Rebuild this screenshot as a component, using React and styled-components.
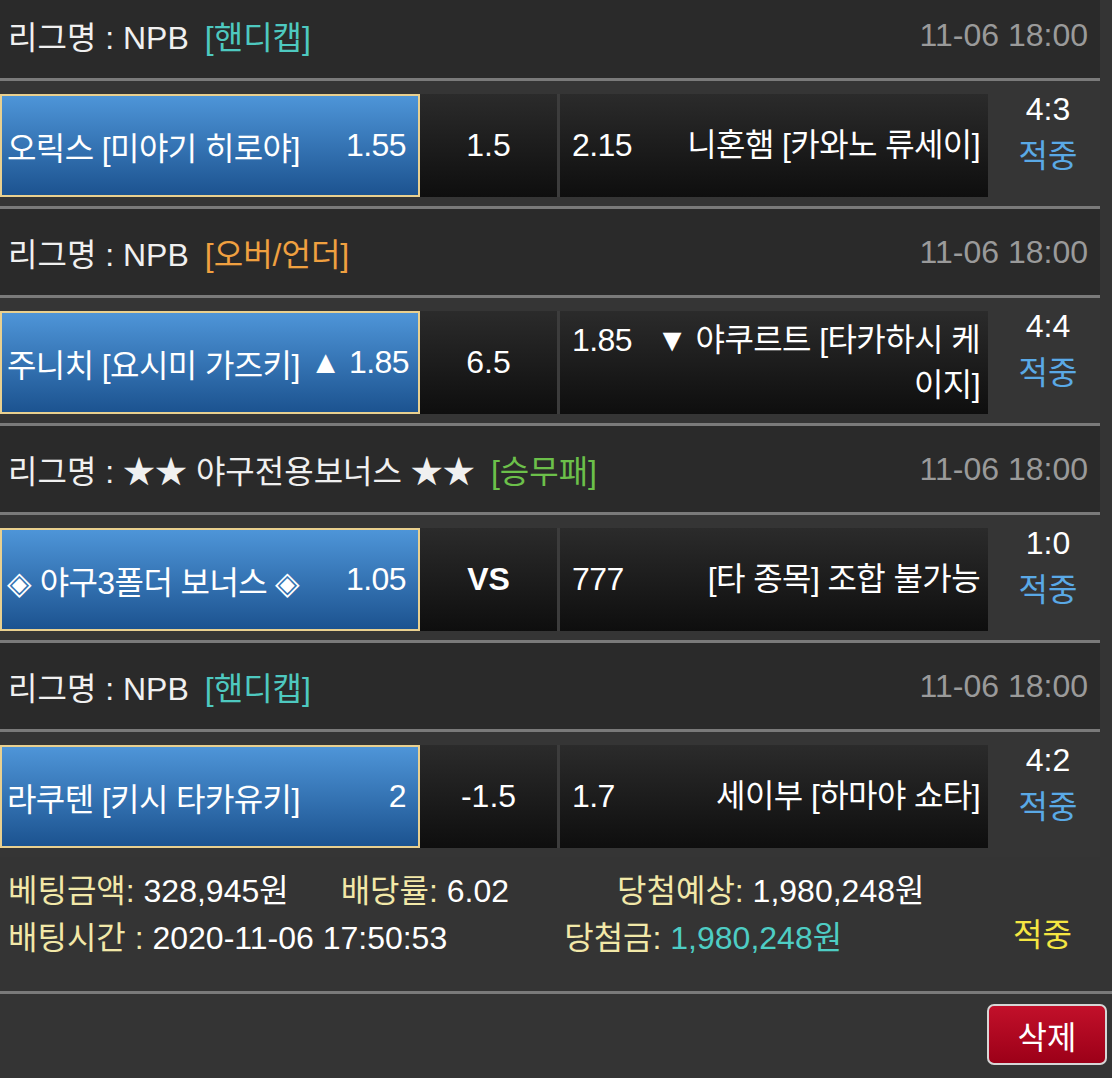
import React from "react";
import styled, { createGlobalStyle } from "styled-components";

const GlobalStyle = createGlobalStyle`
    html, body {
        margin: 0;
        padding: 0;
        background: #343434;
        overflow: hidden;
    }
    body {
        font-family: "Liberation Sans", "Noto Sans CJK KR", sans-serif;
        color: #f2f2f2;
    }
`;

const games = [
    {
        league: "NPB",
        type: "[핸디캡]",
        typeColor: "#4ec9c0",
        date: "11-06 18:00",
        home: "오릭스 [미야기 히로야]",
        homeOdds: "1.55",
        mid: "1.5",
        awayOdds: "2.15",
        away: "니혼햄 [카와노 류세이]",
        score: "4:3",
    },
    {
        league: "NPB",
        type: "[오버/언더]",
        typeColor: "#f0a040",
        date: "11-06 18:00",
        home: "주니치 [요시미 가즈키]",
        homeOdds: "▲ 1.85",
        mid: "6.5",
        awayOdds: "1.85",
        away: "▼ 야쿠르트 [타카하시 케이지]",
        score: "4:4",
    },
    {
        league: "★★ 야구전용보너스 ★★",
        type: "[승무패]",
        typeColor: "#6cc04a",
        date: "11-06 18:00",
        home: "◈ 야구3폴더 보너스 ◈",
        homeOdds: "1.05",
        mid: "VS",
        bold: true,
        awayOdds: "777",
        away: "[타 종목] 조합 불가능",
        score: "1:0",
    },
    {
        league: "NPB",
        type: "[핸디캡]",
        typeColor: "#4ec9c0",
        date: "11-06 18:00",
        home: "라쿠텐 [키시 타카유키]",
        homeOdds: "2",
        mid: "-1.5",
        awayOdds: "1.7",
        away: "세이부 [하마야 쇼타]",
        score: "4:2",
        last: true,
    },
];

const App = () => {
    return (
        <Page>
            <GlobalStyle />
            <Table>
                {games.map((g, i) => (
                    <div key={i}>
                        <Header>
                            <League>
                                리그명 : {g.league}
                                <Type color={g.typeColor}>{g.type}</Type>
                            </League>
                            <DateText>{g.date}</DateText>
                        </Header>
                        <Line />
                        <MatchRow>
                            <HomeCell>
                                <span>{g.home}</span>
                                <span>{g.homeOdds}</span>
                            </HomeCell>
                            <MidCell bold={g.bold}>{g.mid}</MidCell>
                            <AwayCell>
                                <AwayText>
                                    <AwayOdds>{g.awayOdds}</AwayOdds>
                                    {g.away}
                                </AwayText>
                            </AwayCell>
                            <ScoreCell>
                                <div>{g.score}</div>
                                <Hit>적중</Hit>
                            </ScoreCell>
                        </MatchRow>
                        {!g.last && <Line />}
                    </div>
                ))}
            </Table>

            <Summary>
                <SummaryLines>
                    <SummaryLine>
                        <Item>
                            <Label>베팅금액:</Label> 328,945원
                        </Item>
                        <Item gap={52}>
                            <Label>배당률:</Label> 6.02
                        </Item>
                        <Item gap={108}>
                            <Label>당첨예상:</Label> 1,980,248원
                        </Item>
                    </SummaryLine>
                    <SummaryLine>
                        <Item>
                            <Label>배팅시간 :</Label> 2020-11-06 17:50:53
                        </Item>
                        <Item gap={117}>
                            <Label>당첨금:</Label> <Win>1,980,248원</Win>
                        </Item>
                    </SummaryLine>
                </SummaryLines>
                <Result>적중</Result>
            </Summary>
            <Line />
            <Actions>
                <DeleteBtn>삭제</DeleteBtn>
            </Actions>
        </Page>
    );
};

export default App;

const Page = styled.div`
    width: 1112px;
    height: 1078px;
    overflow: hidden;
    background: #343434;
    font-size: 32px;
`;

const Table = styled.div`
    width: 1100px;
    margin-top: -8px;
`;

const Header = styled.div`
    display: flex;
    align-items: center;
    justify-content: space-between;
    height: 86px;
    padding: 0 12px 0 8px;
    background: #2a2a2a;
    box-sizing: border-box;
`;

const League = styled.div`
    color: #f0f0f0;
    white-space: nowrap;
`;

const Type = styled.span`
    color: ${(props) => props.color};
    margin-left: 16px;
`;

const DateText = styled.div`
    color: #9a9a9a;
`;

const Line = styled.div`
    height: 3px;
    background: #7a7a7a;
`;

const MatchRow = styled.div`
    display: flex;
    align-items: stretch;
    padding: 13px 0 9px;
    background: #353535;
`;

const HomeCell = styled.div`
    box-sizing: border-box;
    width: 420px;
    height: 103px;
    display: flex;
    align-items: center;
    justify-content: space-between;
    gap: 10px;
    padding: 0 12px 0 5px;
    border: 2px solid #e9d08f;
    background: linear-gradient(#4e95d8, #1c5390);
    color: #fff;
    white-space: nowrap;
    letter-spacing: -0.6px;
`;

const DarkCell = styled.div`
    box-sizing: border-box;
    height: 103px;
    display: flex;
    align-items: center;
    background: linear-gradient(#2b2b2b, #0e0e0e);
    color: #fff;
`;

const MidCell = styled(DarkCell)`
    width: 140px;
    justify-content: center;
    font-weight: ${(props) => (props.bold ? 700 : 400)};
    border-right: 3px solid #3c3c3c;
`;

const AwayCell = styled(DarkCell)`
    width: 428px;
    padding: 0 8px 0 12px;
    letter-spacing: -0.6px;
`;

const AwayText = styled.div`
    width: 100%;
    text-align: right;
    line-height: 45px;
`;

const AwayOdds = styled.span`
    float: left;
    margin-right: 12px;
`;

const ScoreCell = styled.div`
    flex: 1;
    display: flex;
    flex-direction: column;
    align-items: center;
    padding-left: 8px;
    margin-top: -8px;
    line-height: 47px;
    color: #fff;
`;

const Hit = styled.div`
    color: #5aa9e6;
`;

const Summary = styled.div`
    display: flex;
    align-items: flex-start;
    height: 134px;
    padding: 12px 0 0 8px;
    box-sizing: border-box;
    line-height: 45px;
`;

const SummaryLines = styled.div`
    flex: 1;
    display: flex;
    flex-direction: column;
    gap: 2px;
`;

const SummaryLine = styled.div`
    display: flex;
    white-space: nowrap;
    color: #fff;
`;

const Item = styled.div`
    margin-left: ${(props) => props.gap || 0}px;
`;

const Label = styled.span`
    color: #f2e8a8;
`;

const Win = styled.span`
    color: #4ecdc4;
`;

const Result = styled.div`
    width: 112px;
    padding-left: 13px;
    box-sizing: border-box;
    margin-top: 44px;
    color: #f5e642;
`;

const Actions = styled.div`
    display: flex;
    justify-content: flex-end;
    padding: 10px 5px 0 0;
`;

const DeleteBtn = styled.button`
    width: 120px;
    height: 61px;
    border: 2px solid #d6d6d6;
    border-radius: 7px;
    background: linear-gradient(#c2102a, #9c0018);
    color: #fff;
    font-family: "Liberation Sans", "Noto Sans CJK KR", sans-serif;
    font-size: 32px;
    cursor: pointer;
`;
